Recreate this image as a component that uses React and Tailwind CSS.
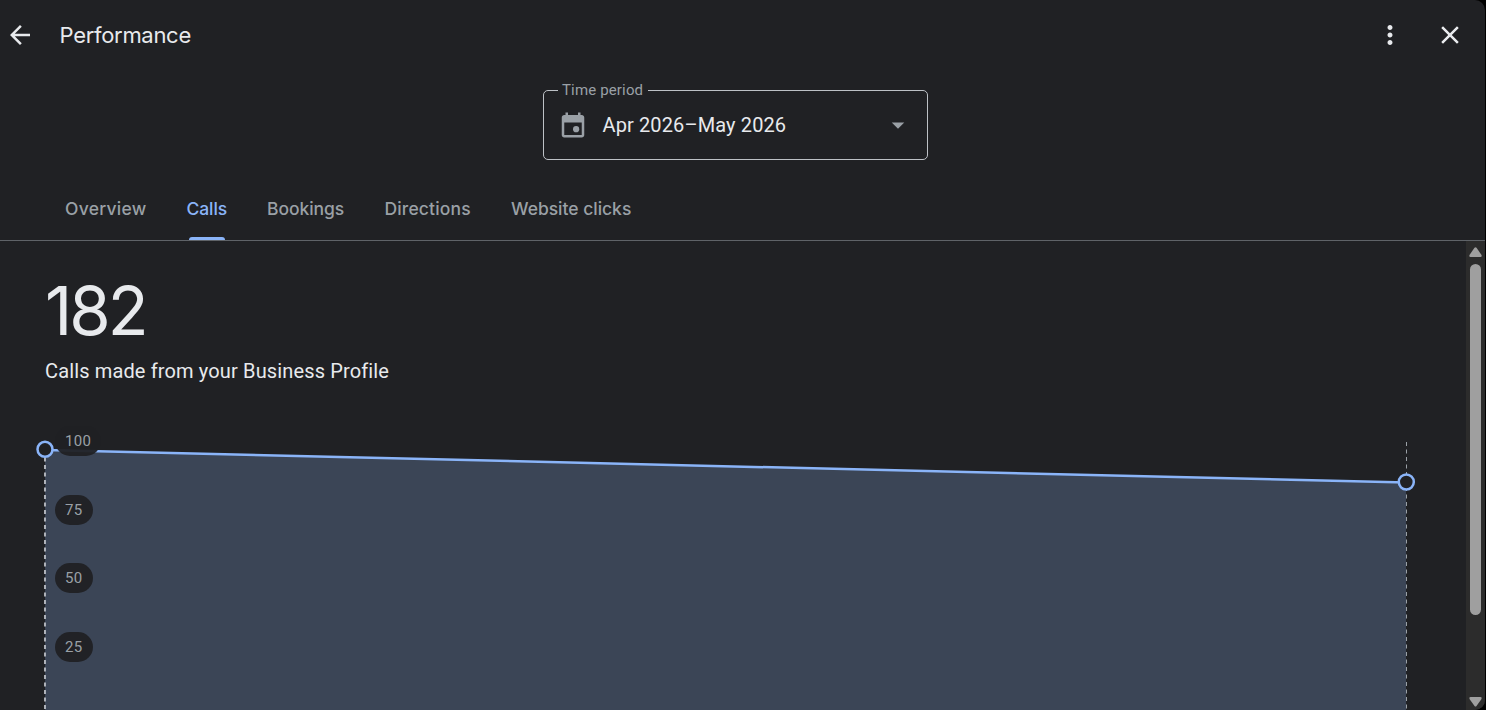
import { useState } from "react";

const tabs = [
  { name: "Overview", style: "w-[82px] tracking-[0.25px]" },
  { name: "Calls", style: "w-10 tracking-[-0.1px] -ml-[0.5px] mr-[0.5px]" },
  { name: "Bookings", style: "w-[78px] tracking-[-0.05px]" },
  { name: "Directions", style: "w-[86px] tracking-[0.15px] -ml-[0.5px] mr-[0.5px]" },
  { name: "Website clicks", style: "w-[121px] tracking-[-0.02px]" },
];

const ticks = [100, 75, 50, 25];

const Header = () => (
  <header className="flex h-[70px] items-center pl-[5px] pr-5 text-[#e8eaed]">
    <button aria-label="Back" className="mr-[24.5px]">
      <svg width="30" height="30" viewBox="0 0 24 24" fill="currentColor">
        <path d="M20 11H7.83l5.59-5.59L12 4l-8 8 8 8 1.41-1.41L7.83 13H20v-2z" />
      </svg>
    </button>
    <h1 className="font-['Inter','Roboto',sans-serif] text-[22px] leading-7 tracking-[-0.3px]">
      Performance
    </h1>
    <div className="ml-auto flex items-center gap-[30px]">
      <button aria-label="More options">
        <svg width="30" height="30" viewBox="0 0 24 24" fill="currentColor">
          <path d="M12 8c1.1 0 2-.9 2-2s-.9-2-2-2-2 .9-2 2 .9 2 2 2zm0 2c-1.1 0-2 .9-2 2s.9 2 2 2 2-.9 2-2-.9-2-2-2zm0 6c-1.1 0-2 .9-2 2s.9 2 2 2 2-.9 2-2-.9-2-2-2z" />
        </svg>
      </button>
      <button aria-label="Close">
        <svg width="30" height="30" viewBox="0 0 24 24" fill="currentColor">
          <path d="M19 6.41L17.59 5 12 10.59 6.41 5 5 6.41 10.59 12 5 17.59 6.41 19 12 13.41 17.59 19 19 17.59 13.41 12z" />
        </svg>
      </button>
    </div>
  </header>
);

const PeriodSelect = () => (
  <div className="relative ml-[543px] mt-5 flex h-[70px] w-[385px] items-center rounded-[5px] border border-[#bdc1c6] pl-[14px] pr-[14px]">
    <span className="absolute -top-[11px] left-[14px] w-[90px] bg-[#202124] pl-[4px] text-[15px] leading-5 tracking-[0.15px] text-[#9aa0a6]">
      Time period
    </span>
    <svg width="30" height="30" viewBox="0 0 24 24" fill="#9aa0a6">
      <path d="M19 4h-1V2h-2v2H8V2H6v2H5c-1.11 0-1.99.9-1.99 2L3 20c0 1.1.89 2 2 2h14c1.1 0 2-.9 2-2V6c0-1.1-.9-2-2-2zm0 16H5V10h14v10z" />
      <circle cx="14.5" cy="15.3" r="2.5" />
    </svg>
    <span className="ml-[14.5px] text-[20px] leading-[30px] tracking-[0.12px] text-[#e8eaed]">
      Apr 2026–May 2026
    </span>
    <svg
      className="ml-auto"
      width="30"
      height="30"
      viewBox="0 0 24 24"
      fill="#9aa0a6"
    >
      <path d="M7 10l5 5 5-5z" />
    </svg>
  </div>
);

const Chart = () => (
  <div className="relative h-[270px] w-[1466px]">
    <svg width="1466" height="270" viewBox="0 440 1466 270" fill="none">
      <path d="M45 450L1406 482.5V710H45z" fill="#3b4556" />
      <path d="M45 450L1406 482.5" stroke="#8ab4f8" strokeWidth="2.5" />
      <path d="M45 450V710" stroke="#adb1b8" strokeWidth="2" strokeDasharray="4 3.5" />
      <path d="M1406.5 442V710" stroke="#9aa0a6" strokeWidth="1" strokeDasharray="4 3.5" />
      <circle cx="45" cy="449.3" r="7.5" fill="#202124" stroke="#8ab4f8" strokeWidth="2.5" />
      <circle cx="1406.3" cy="482" r="7.5" fill="#202124" stroke="#8ab4f8" strokeWidth="2.5" />
    </svg>
    {/* Axis labels over the plot */}
    <div className="absolute left-[55px] -top-[14px] flex flex-col items-start gap-[38.7px]">
      {ticks.map((tick) => (
        <span
          key={tick}
          className="h-[30px] min-w-[38px] rounded-full bg-[#202124]/95 px-[10px] text-[15px] leading-[30px] tracking-[0.3px] text-[#9aa0a6]"
        >
          {tick}
        </span>
      ))}
    </div>
  </div>
);

const Scrollbar = () => (
  <div className="flex w-[19px] flex-col items-center bg-[#2c2c2c]">
    <svg width="19" height="23" viewBox="0 0 19 23" fill="#9f9f9f">
      <path d="M8.5 6.8q1-1 2 0l5 7.2q.7 2-1 2h-10q-1.7 0-1-2z" />
    </svg>
    <div className="h-[351px] w-[11px] rounded-full bg-[#9f9f9f]" />
    <svg className="mt-auto" width="19" height="14" viewBox="0 0 19 14" fill="#9f9f9f">
      <path d="M8.5 10q1 1 2 0l5-7q.7-2-1-2h-10q-1.7 0-1 2z" />
    </svg>
  </div>
);

export default function App() {
  const [active, setActive] = useState("Calls");

  return (
    <div className="h-[710px] w-[1486px] overflow-hidden bg-black font-['Roboto',sans-serif]">
      <div className="flex h-[710px] w-[1485px] flex-col overflow-hidden rounded-r-[10px] bg-[#202124]">
        <Header />
        <PeriodSelect />
        <nav className="mt-[19px] flex h-[62px] gap-10 border-b border-[#5f6368] pl-[65px] font-['Inter','Roboto',sans-serif]">
          {tabs.map((tab) => (
            <button
              key={tab.name}
              onClick={() => setActive(tab.name)}
              className={`relative flex h-[61px] items-center whitespace-nowrap text-[17.5px] font-medium ${tab.style} ${
                active === tab.name ? "text-[#8ab4f8]" : "text-[#9aa0a6]"
              }`}
            >
              {tab.name}
              {active === tab.name && (
                <span className="absolute bottom-0 left-[2.5px] right-[1.5px] h-[3px] rounded-t-[3px] bg-[#8ab4f8]" />
              )}
            </button>
          ))}
        </nav>
        <main className="flex min-h-0 flex-1">
          <section className="w-[1466px] overflow-hidden">
            <div className="h-[199px] pl-[45px] pt-[30px]">
              <p className="font-['Inter','Roboto',sans-serif] text-[67px] leading-[80px] tracking-[-3px] text-[#e8eaed]">
                182
              </p>
              <p className="mt-[5px] text-[20px] leading-[30px] tracking-[0.14px] text-[#e8eaed]">
                Calls made from your Business Profile
              </p>
            </div>
            <Chart />
          </section>
          <Scrollbar />
        </main>
      </div>
    </div>
  );
}
